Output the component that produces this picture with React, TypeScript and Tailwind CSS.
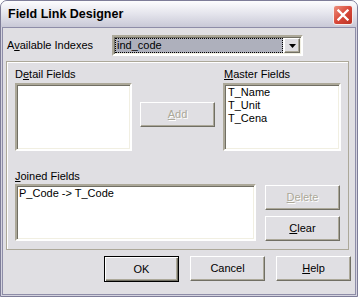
import React from 'react';
import clsx from 'clsx';

const ui = "font-['Liberation_Sans',Arial,sans-serif] text-[11px] leading-[13px]";

const U = ({ children }: { children: React.ReactNode }) => <span className="underline underline-offset-[1px]">{children}</span>;

interface IBtn {
  children: React.ReactNode;
  disabled?: boolean;
  isDefault?: boolean;
  className?: string;
}

const WinButton: React.FC<IBtn> = ({ children, disabled, isDefault, className }) => (
  <div
    className={clsx(
      'w-[75px] h-[25px] flex items-center justify-center bg-[#e0dfe3]',
      isDefault
        ? 'border border-black shadow-[inset_1px_1px_0_#ffffff,inset_-1px_-1px_0_#716f64,inset_-2px_-2px_0_#aca899]'
        : 'border border-t-white border-l-white border-b-[#716f64] border-r-[#716f64] shadow-[inset_-1px_-1px_0_#aca899]',
      disabled ? 'text-[#aca899] [text-shadow:1px_1px_0_#ffffff]' : 'text-black',
      className
    )}
  >
    {children}
  </div>
);

const ListBox: React.FC<{ className?: string; items?: string[]; pad?: string }> = ({ className, items = [], pad = 'pl-[3px]' }) => (
  <div
    className={clsx(
      'bg-white border-2 border-t-[#aca899] border-l-[#aca899] border-b-white border-r-white shadow-[inset_1px_1px_0_#716f64,inset_-1px_-1px_0_#f1efe2] pt-[1px]',
      pad,
      className
    )}
  >
    {items.map((it) => (
      <div key={it} className="whitespace-pre">
        {it}
      </div>
    ))}
  </div>
);

export default function App() {
  return (
    <div className={clsx(ui, 'w-[358px] h-[297px] flex flex-col border border-[#7e7d98] rounded-t-[7px] overflow-hidden bg-[#d4d3df] text-black')}>
      {/* title bar */}
      <div className="h-[26px] shrink-0 flex items-center justify-between pl-[7px] pr-[4px] bg-gradient-to-b from-[#fdfdfe] via-[#e4e4ec] to-[#c9c9d7]">
        <span className="font-bold text-[12.5px] tracking-[0px] pt-[1px]">Field Link Designer</span>
        <div className="w-[20px] h-[20px] mt-[1px] rounded-[3px] border border-[#f6eeee] bg-gradient-to-br from-[#ec8e7c] via-[#d8483a] to-[#bb3222] flex items-center justify-center">
          <svg width="12" height="12" viewBox="0 0 12 12">
            <path d="M1.5 1.5 L10.5 10.5 M10.5 1.5 L1.5 10.5" stroke="#fff" strokeWidth="2.3" strokeLinecap="square" />
          </svg>
        </div>
      </div>

      {/* frame */}
      <div className="flex-1 px-[1px] pb-[1px] flex">
        <div className="flex-1 border border-[#8e8da8] bg-[#e0dfe3] flex flex-col">
          {/* index row */}
          <div className="flex items-center mt-[7px]">
            <div className="w-[109px] pl-[4px]">
              A<U>v</U>ailable Indexes
            </div>
            <div className="w-[191px] h-[21px] bg-white border-2 border-t-[#aca899] border-l-[#aca899] border-b-white border-r-white shadow-[inset_1px_1px_0_#716f64,inset_-1px_-1px_0_#f1efe2] flex items-center p-[1px]">
              <div className="flex-1 h-full bg-[#aeb0bc] border border-dotted border-black flex items-center pl-[1px]">ind_code</div>
              <div className="w-[16px] h-full ml-[1px] bg-[#e0dfe3] border border-t-white border-l-white border-b-[#716f64] border-r-[#716f64] shadow-[inset_-1px_-1px_0_#aca899] flex items-center justify-center">
                <svg width="7" height="4" viewBox="0 0 7 4">
                  <path d="M0 0 H7 L3.5 4 Z" fill="#000" />
                </svg>
              </div>
            </div>
          </div>

          {/* panel */}
          <div className="ml-[3px] mt-[5px] w-[343px] h-[189px] border border-[#aca899] shadow-[inset_1px_1px_0_#ffffff] pl-[8px] pt-[6px]">
            <div className="flex items-start">
              <div className="w-[117px]">
                <div className="h-[13px] mb-[2px]">
                  D<U>e</U>tail Fields
                </div>
                <ListBox className="w-[117px] h-[68px]" />
              </div>
              <WinButton disabled className="ml-[8px] mt-[34px]">
                <U>A</U>dd
              </WinButton>
              <div className="ml-[8px] w-[118px]">
                <div className="h-[13px] mb-[2px] pl-[1px]">
                  <U>M</U>aster Fields
                </div>
                <ListBox className="w-[118px] h-[68px]" items={['T_Name', 'T_Unit', 'T_Cena']} pad="pl-[3px]" />
              </div>
            </div>

            <div className="mt-[19px] h-[13px] mb-[1px]">
              <U>J</U>oined Fields
            </div>
            <div className="flex items-start">
              <ListBox className="w-[241px] h-[57px]" items={['P_Code -> T_Code']} pad="pl-[2px]" />
              <div className="ml-[9px] mt-[1px] flex flex-col gap-[6px]">
                <WinButton disabled>
                  <U>D</U>elete
                </WinButton>
                <WinButton>
                  <U>C</U>lear
                </WinButton>
              </div>
            </div>
          </div>

          {/* dialog buttons */}
          <div className="flex justify-end gap-[11px] pr-[4px] mt-[6px]">
            <WinButton isDefault className="h-[26px]">OK</WinButton>
            <WinButton>Cancel</WinButton>
            <WinButton>
              <U>H</U>elp
            </WinButton>
          </div>
        </div>
      </div>
    </div>
  );
}
